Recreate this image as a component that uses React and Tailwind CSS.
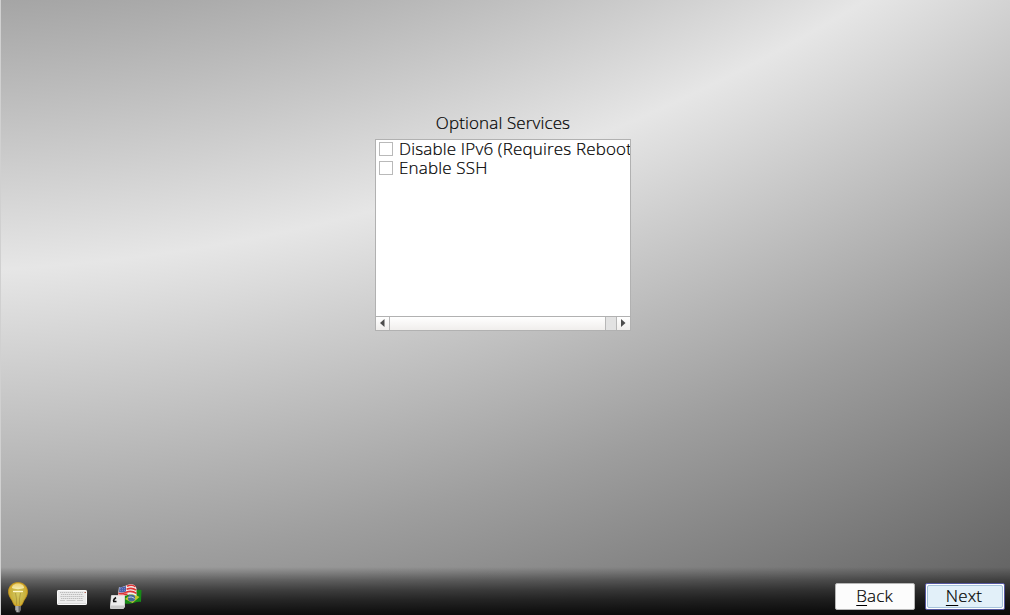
const Bulb = () => (
  <svg width="20" height="31" viewBox="0 0 20 31">
    <defs>
      <radialGradient id="glass" cx="50%" cy="50%" r="55%">
        <stop offset="0" stopColor="#d6ca62" />
        <stop offset=".65" stopColor="#c9b340" />
        <stop offset="1" stopColor="#dca722" />
      </radialGradient>
      <linearGradient id="shine" x1="0" y1="0" x2="0" y2="1">
        <stop offset="0" stopColor="#ecd070" />
        <stop offset="1" stopColor="#f5edb0" />
      </linearGradient>
    </defs>
    <path d="M10 .5C4.500.5.5 4.500.5 9.700c0 5 3.300 7.300 4.700 11.300.5 1.300 1.300 2.500 2.300 3h5c1-.5 1.800-1.700 2.300-3 1.400-4 4.700-6.300 4.700-11.300C19.500 4.500 15.500.5 10 .5z" fill="url(#glass)" stroke="#c3951d" strokeWidth=".8" />
    <path d="M4 6c0-3 3-4.500 6-4.500S16 3 16 6c-3 1.500-9 1.500-12 0z" fill="url(#shine)" />
    <path d="M5 9.500h10" stroke="#fff8cc" strokeWidth="1.300" />
    <path d="M7.500 11l1 6v6M12.500 11l-1 6v6" fill="none" stroke="#a9943a" strokeWidth=".8" />
    <path d="M7 24h6v4l-1.500 2.500h-3L7 28z" fill="#6c6c6c" />
    <path d="M7.500 25h3M7.500 27h3M8.500 29h2" stroke="#e8e8e8" strokeWidth="1" />
  </svg>
);

const Keyboard = () => (
  <svg width="30" height="15" viewBox="0 0 30 15">
    <rect x=".5" y=".5" width="29" height="14" rx=".6" fill="#ececec" stroke="#fafafa" />
    <path d="M3 2.500h23M4 4.500h22M3.500 6.500h23M4 8.500h22" stroke="#bdbdbd" strokeWidth="1" strokeDasharray="1.400 .6" />
    <path d="M3 10.500h5M9.500 10.500h9M20 10.500h6" stroke="#c8c8c8" />
    <path d="M1 13.500h28" stroke="#d8d8d8" />
    <path d="M27.500 2.500H29" stroke="#b06050" />
  </svg>
);

const Locale = () => (
  <svg width="32" height="26" viewBox="0 0 32 26">
    <path d="M14 9c4-2 10-4 17.500-3l-.5 12c-5-1-9 3-16 1.500z" fill="#168a16" />
    <path d="M15 15l7-6 7.500 4-7 6z" fill="#bfc62a" />
    <circle cx="21.500" cy="14" r="3.600" fill="#46699c" />
    <path d="M18.500 13.500c2-1 4-.5 6 1" fill="none" stroke="#c7d6df" />
    <path d="M9 3c4 1 7-2 10-2.500 4-.8 6.500.5 7.500 4v7.500c-2.500-2-6-2.500-9-1-3 1.500-6 1-9.500 0z" fill="#f4eeee" />
    <path d="M17 2.300c3-1.500 6.500-1 8.500.5M16.500 5.200c4-1.500 7.500-.7 9.500 1M16 8.200c4-1.500 8-.5 10.500 1.200M8.500 9.200c3 .6 5 .3 7.500-.7M8 11.500c4 .5 6.500-.5 9.500-1.500" fill="none" stroke="#dd3434" strokeWidth="1.600" />
    <path d="M9.500 3c2.500.5 4.500 0 6.500-1v5.500c-2 .8-4.500 1.200-7 .8z" fill="#4a5eab" />
    <path d="M10 4.700h5.500M10 6.600h5.500" stroke="#8997cb" strokeWidth=".8" strokeDasharray="1 1" />
    <path d="M1.500 11.500h13v11.500l-1 1.500H.5v-3.500z" fill="#ececec" stroke="#fff" strokeWidth=".6" />
    <path d="M1 21.500h13v2.500H.5z" fill="#c8c8c8" />
    <path d="M6 13.500C4.500 14.500 3.500 15.500 3.500 17M3 17.500h3.500" fill="none" stroke="#111" strokeWidth="1.600" />
  </svg>
);

const services = ["Disable IPv6 (Requires Reboot)", "Enable SSH"];

export default function App() {
  return (
    <div className="flex h-[615px] w-[1010px] flex-col overflow-hidden border-l border-[#d0d0d0] bg-[radial-gradient(circle_at_-100px_-1577px,#a5a5a5_1580px,#e6e6e6_1849px,#9e9e9e_2150px,#646464_2420px)] font-['Open_Sans',sans-serif] text-[17px] font-light tracking-[0.13px] text-black [-webkit-text-stroke:0.2px_#000]">
      <main className="flex h-[567px] flex-col pl-[374px] pt-[112px]">
        <h1 className="h-[27px] w-[256px] whitespace-nowrap text-center leading-[21px]">Optional Services</h1>
        <section className="flex h-[192px] w-[256px] flex-col border border-[#b1b1b1] bg-white">
          <ul className="flex-1 overflow-hidden">
            {services.map((name) => (
              <li key={name} className="flex h-[19px] items-start whitespace-nowrap pl-[3px] pt-[2px]">
                <span className="mr-[6px] h-[14px] w-[14px] shrink-0 border border-[#b9b9b9] bg-white" />
                <span className="-mt-[2px] leading-[17px] tracking-[0.17px]">{name}</span>
              </li>
            ))}
          </ul>
          <div className="flex h-[14px] border-t border-[#b1b1b1] bg-[#e2e2e2]">
            <div className="flex w-[14px] items-start border-r border-[#b7b7b7] bg-linear-to-b from-white to-[#f0eeec] pl-[4px] pt-[2px]">
              <svg width="5" height="8" viewBox="0 0 5 8"><path d="M4.500 0v8L0 4z" fill="#4d4d4d" /></svg>
            </div>
            <div className="w-[216px] border-r border-[#b7b7b7] bg-linear-to-b from-white to-[#f0eeec]" />
            <div className="ml-[10px] flex flex-1 items-start border-l border-[#b7b7b7] bg-linear-to-b from-white to-[#f0eeec] pl-[4px] pt-[2px]">
              <svg width="5" height="8" viewBox="0 0 5 8"><path d="M0 0v8l4.500-4z" fill="#4d4d4d" /></svg>
            </div>
          </div>
        </section>
      </main>
      <footer className="flex h-[48px] bg-[linear-gradient(to_bottom,rgba(0,0,0,0)_0px,rgba(0,0,0,0.16)_6px,rgba(0,0,0,0.36)_13px,rgba(0,0,0,0.58)_23px,rgba(0,0,0,0.74)_33px,rgba(0,0,0,0.86)_43px,rgba(0,0,0,0.91)_48px)] pl-[7px] pt-[15px]">
        <Bulb />
        <div className="ml-[29px] mt-[8px]"><Keyboard /></div>
        <div className="ml-[23px] mt-[2px]"><Locale /></div>
        <div className="ml-auto mr-[5px] flex gap-[10px] pt-px">
          <button className="h-[27px] w-[80px] rounded-[2px] border border-[#b6b6b6] bg-[#fcfcfc] pb-[2px] pr-px leading-[23px] tracking-[0.13px]"><span className="underline underline-offset-[3px]">B</span>ack</button>
          <button className="h-[27px] w-[80px] rounded-[2px] border border-[#5558a0] bg-white p-px tracking-[0.13px]"><span className="flex h-full items-center justify-center rounded-[2px] border border-[#a5c3db] bg-[#e2f0f9] pb-[2px] pr-[2px] leading-[19px]"><span className="underline underline-offset-[3px]">N</span>ext</span></button>
        </div>
      </footer>
    </div>
  );
}
